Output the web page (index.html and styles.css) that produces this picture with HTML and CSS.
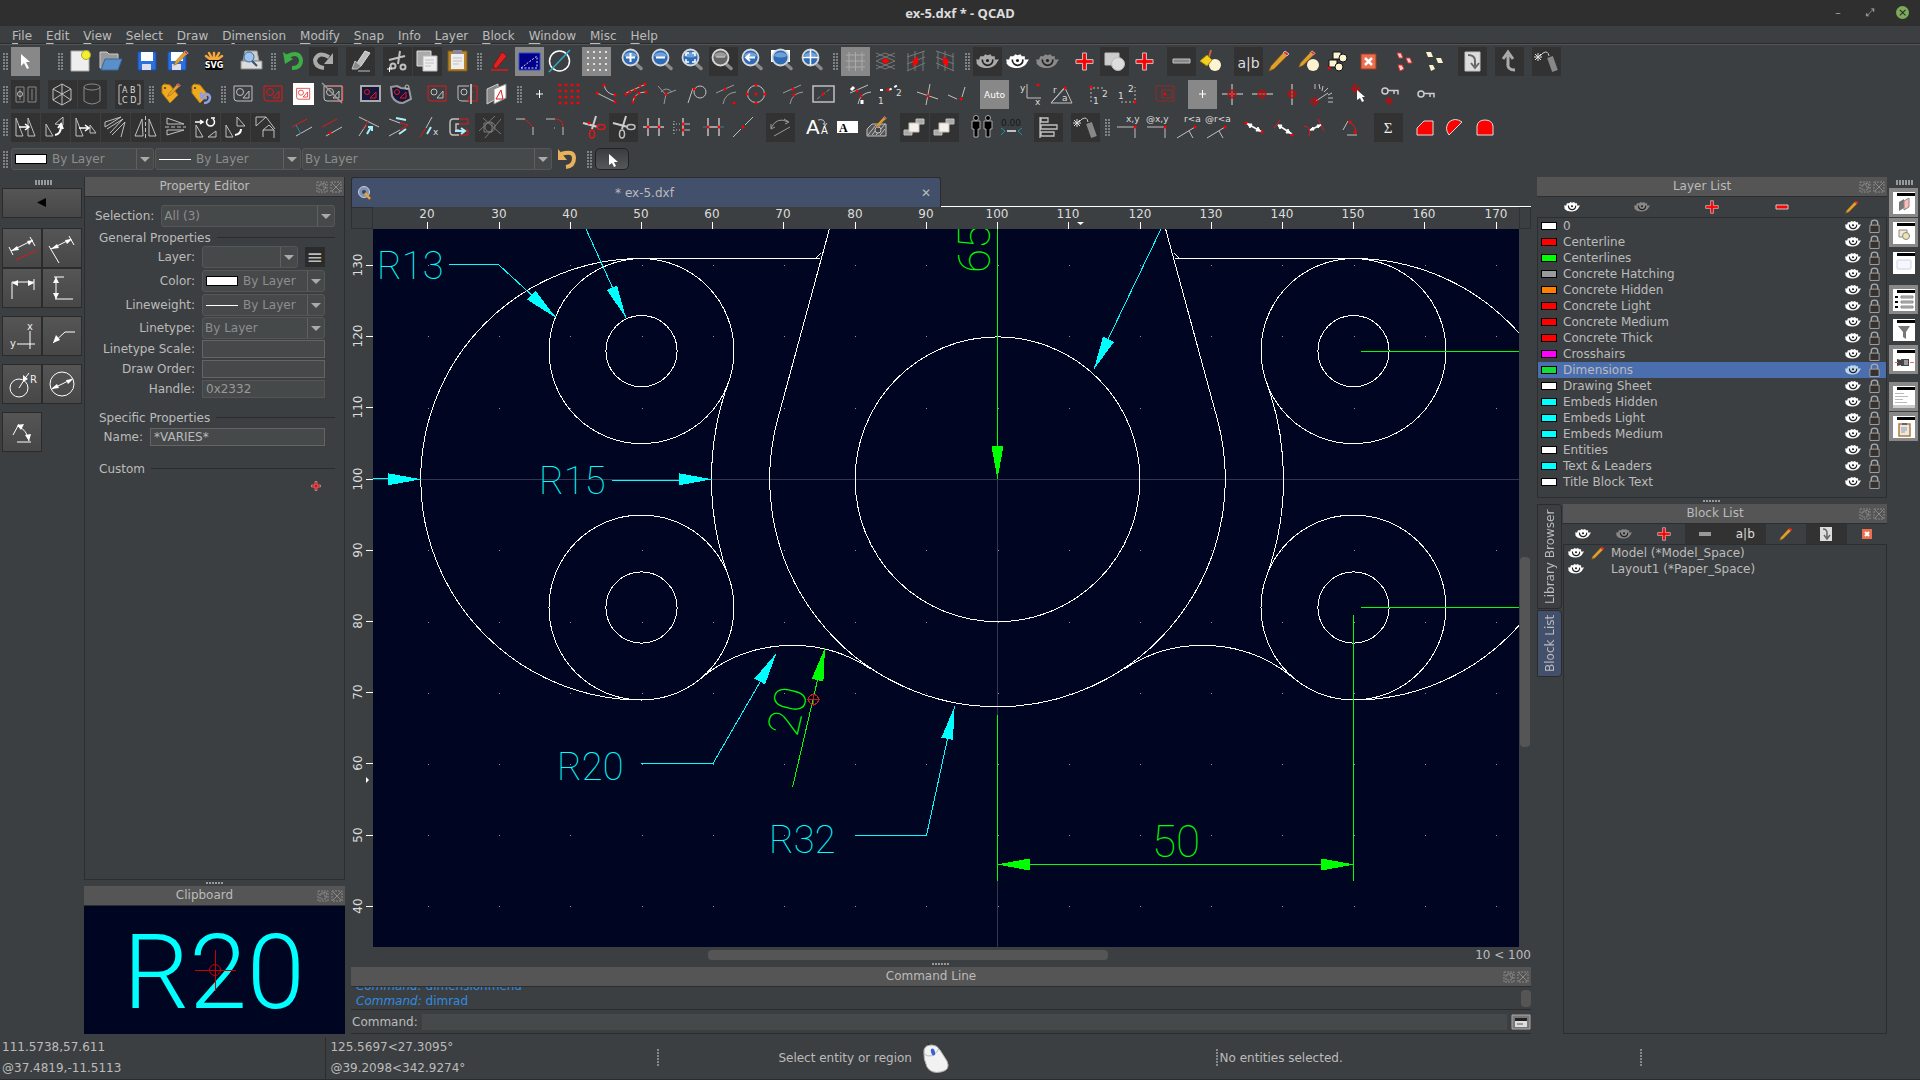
FILE: index.html
```html
<!DOCTYPE html>
<html lang="en">
<head>
<meta charset="utf-8">
<title>ex-5.dxf * - QCAD</title>
<link rel="stylesheet" href="styles.css">
</head>
<body>
<svg class="defs" aria-hidden="true">
<symbol id="mag" viewBox="0 0 29 29"><path d="M16 16L22 21.500" stroke="#8a8a8a" stroke-width="3.500" stroke-linecap="round"/><circle cx="11.500" cy="10.500" r="8" fill="#2f6bb5" stroke="#d4d8dc" stroke-width="1.800"/><path d="M5 9a7 6 0 0 1 13 0q-6 3-13 0z" fill="#6f9fd8" stroke="none"/></symbol>
<symbol id="eye" viewBox="0 0 22 16"><path d="M1 9L0 6l3 0 1-3 3 0 2-2 2 1 3-1 1 2 3 0v3l4 0-2 3c-2 6-16 8-20 0z" fill="currentColor" stroke="none"/><path d="M6 6c0 8 11 7 10 0" fill="none" stroke="#222" stroke-width="1.600"/><circle cx="11" cy="7" r="1.500" fill="#222" stroke="none"/></symbol>
<symbol id="lock" viewBox="0 0 12 16"><path d="M2.500 7V4q0-3 3.500-3t3.500 3v3" fill="none" stroke="#a8a8a8" stroke-width="1.500"/><path d="M1 6.500h10v8H1z" fill="#35312f" stroke="#a8a8a8"/></symbol>
<symbol id="plus" viewBox="0 0 20 20"><path d="M8 1h4v7h7v4h-7v7H8v-7H1V8h7z" fill="#f00" stroke="#ccc"/></symbol>
<symbol id="pencil" viewBox="0 0 22 22"><path d="M1 21L3 16 15 3l4 3L6 19z" fill="#dfa02f" stroke="#8a5a10" stroke-width=".7"/><path d="M15 3l2-2 4 3-2 2z" fill="#f22"/></symbol>
<symbol id="win" viewBox="0 0 22 22"><path d="M0 0h22v22H0z" fill="#fff"/><path d="M0 1h22v3H4V1" fill="#000"/></symbol>
<symbol id="float" viewBox="0 0 12 12"><path d="M1 1h10v10H1zM3 4h5v5H3zM5 4V2.500h4.500V8H8" fill="none" stroke="#8a8a8a" stroke-dasharray="2 1"/></symbol>
<symbol id="close" viewBox="0 0 12 12"><path d="M1 1h10v10H1z" fill="none" stroke="#8a8a8a" stroke-dasharray="2 1"/><path d="M2 2l8 8M10 2l-8 8" fill="none" stroke="#8a8a8a"/></symbol>
<symbol id="shape" viewBox="0 0 29 29"><path d="M5 6h18v15H8q-3 0-3-3z" fill="none"/><circle cx="11" cy="12" r="3.500" fill="none"/><path d="M14 18h6v-7z" fill="none"/></symbol>
<symbol id="tag" viewBox="0 0 29 29"><path d="M5 6l2-2 6 1 8 10-8 8L5 13z" fill="#f0aa1e" stroke="#b87c0c"/><path d="M8 8h0" stroke="#333" stroke-width="2" stroke-linecap="round"/></symbol>
<symbol id="scis" viewBox="0 0 29 29"><path d="M17 3L13 16M4 10l15 4" stroke="#ccc" stroke-width="2"/><ellipse cx="22" cy="14" rx="4" ry="2.500" fill="none" stroke-width="1.500"/><ellipse cx="13" cy="21" rx="2.500" ry="4" fill="none" stroke-width="1.500"/></symbol>
<symbol id="bomb" viewBox="0 0 29 29"><path d="M18 10l5 14" stroke="#888" stroke-width="6"/><path d="M17 9q-1-6-6-3l-3 3" fill="none" stroke="#ccc"/><path d="M6 6v8M2 10h8M3 7l6 6M9 7l-6 6" stroke="#ddd"/></symbol>
<symbol id="key" viewBox="0 0 18 10"><circle cx="4" cy="5" r="3" fill="none" stroke="#ccc" stroke-width="1.500"/><path d="M7 4.500h10v4M13 5v3" fill="none" stroke="#ccc" stroke-width="1.500"/></symbol>
<symbol id="org" viewBox="0 0 10 10"><circle cx="5" cy="5" r="3.500" fill="none" stroke="#d00"/><path d="M0 5h10M5 0v10" stroke="#d00"/></symbol>
</svg>

<header class="title"><h1>ex-5.dxf * - QCAD</h1><div class="wm"><button aria-label="Minimise">–</button><button aria-label="Restore">⤢</button><button class="x" aria-label="Close">×</button></div></header>
<nav class="menu"><a href="#"><u>F</u>ile</a><a href="#"><u>E</u>dit</a><a href="#"><u>V</u>iew</a><a href="#"><u>S</u>elect</a><a href="#"><u>D</u>raw</a><a href="#">D<u>i</u>mension</a><a href="#"><u>M</u>odify</a><a href="#"><u>S</u>nap</a><a href="#"><u>I</u>nfo</a><a href="#"><u>L</u>ayer</a><a href="#"><u>B</u>lock</a><a href="#"><u>W</u>indow</a><a href="#"><u>M</u>isc</a><a href="#"><u>H</u>elp</a></nav>

<div class="bar" role="toolbar">
<i class="h"></i><button class="on"><svg><path d="M10 7v12l3-3 3 6 2-1-3-6h4z" fill="#fff" stroke="none"/></svg></button><i class="gap"></i><i class="h"></i>
<button><svg><path d="M5 4h18v20H5z" fill="#eee" stroke="#aaa"/><circle cx="20" cy="8" r="4.500" fill="#f4ee2c" stroke="#a8a83a"/></svg></button>
<button><svg><path d="M4 5h7l2 2h9v14H4z" fill="#999" stroke="#ccc"/><path d="M9 12h17l-4 11H5z" fill="#5b8fc8" stroke="#3568a0"/></svg></button><i class="s"></i>
<button><svg><path d="M5 5h18v18H5z" fill="#2a6fe0" stroke="#1b4faa"/><path d="M8 5h12v9H8z" fill="#fff" stroke="none"/><path d="M9 17h9v6H9z" fill="#dde" stroke="none"/></svg></button>
<button><svg><path d="M5 5h18v18H5z" fill="#2a6fe0" stroke="#1b4faa"/><path d="M8 5h12v9H8z" fill="#fff" stroke="none"/><path d="M9 17h9v6H9z" fill="#dde" stroke="none"/><use href="#pencil" x="10" y="3" width="16" height="16"/></svg></button><i class="s"></i>
<button><svg><path d="M14 15V6M14 15L6 9M14 15l8-6M14 15L9 6M14 15l5-9" stroke="#f8a83a" stroke-width="2.500" stroke-linecap="round"/><rect x="5" y="13" width="18" height="10" rx="2" fill="#000" stroke="none"/><text x="14" y="21" text-anchor="middle" class="b">SVG</text></svg></button><i class="s"></i>
<button><svg><path d="M8 4h12l2 10H6z" fill="#ccc" stroke="#999"/><path d="M4 14h21v8H4z" fill="#ddd" stroke="#888"/><circle cx="12" cy="10" r="5" fill="#9fc3ea" stroke="#3c6ea8"/><path d="M15 14l5 5" stroke="#357" stroke-width="2"/></svg></button><i class="h"></i>
<button><svg><path d="M7 10q13-7 15 3 0 8-9 8" stroke="#3cae45" stroke-width="4"/><path d="M4 5l2 12 8-5z" fill="#3cae45" stroke="none"/></svg></button>
<button class="dk"><svg><path d="M20 10Q9 4 6 13q0 7 9 8" stroke="#aaa" stroke-width="4"/><path d="M24 6v11h-9z" fill="#aaa" stroke="none"/></svg></button><i class="s"></i>
<button class="dk"><svg><path d="M19 4l5 2-9 13H9z" fill="#bbb" stroke="#ddd"/><path d="M9 14l6 5-4 3H6zM12 24h12" fill="#888"/></svg></button><i class="s"></i>
<button class="dk"><svg><path d="M17 4l-2 13M6 13l16-4" stroke-width="2"/><circle cx="20" cy="20" r="2.500" stroke-width="2"/><circle cx="10" cy="19" r="2.500" stroke-width="2"/><path d="M4 22h5M6.500 20v5" stroke="#fff"/></svg></button>
<button class="dk"><svg><path d="M4 4h14v15H4z" fill="#aaa" stroke="#ddd"/><path d="M10 9h14v15H10z" fill="#eee" stroke="#bbb"/><path d="M12 13h9M12 16h9M12 19h6"/></svg></button>
<button><svg><path d="M5 4h19v20H5z" fill="#b8842c" stroke="#7c5514"/><path d="M8 7h13v15H8z" fill="#eee" stroke="none"/><path d="M10 3h9v4h-9z" fill="#889" stroke="none"/><path d="M10 11h9M10 14h9M10 17h6"/></svg></button><i class="h"></i>
<button><svg><path d="M8 19l9-14 5 4-11 13z" fill="#d22" stroke="#811"/><path d="M6 23h17" class="r" stroke-width="1.500"/></svg></button>
<button class="on"><svg><path d="M4 6h21v17H4z" fill="#00008b" stroke="#2f4fd0"/><path d="M6 21L22 9M6 21h16V9" stroke="#dde" stroke-dasharray="2 1.500"/></svg></button>
<button><svg><circle cx="14.500" cy="14" r="10" stroke="#fff" stroke-width="1.500"/><path d="M4 25L25 3" stroke="#2fa8c8" stroke-width="1.500"/></svg></button><i class="s"></i>
<button class="on"><svg><path d="M5 5h20M5 11h20M5 17h20M5 23h20" stroke="#ddd" stroke-width="2" stroke-dasharray="2 4"/></svg></button><i class="s"></i>
<button><svg><use href="#mag"/><path d="M7 10.500h9M11.500 6v9" stroke="#fff" stroke-width="2"/></svg></button>
<button><svg><use href="#mag"/><path d="M7 10.500h9" stroke="#fff" stroke-width="2"/></svg></button>
<button><svg><use href="#mag"/><path d="M7 9V6h3M13 6h3v3M16 12v3h-3M10 15H7v-3" stroke="#fff" stroke-width="1.500"/></svg></button>
<button class="dk"><svg class="gray"><use href="#mag"/><path d="M7 10h9" stroke="#ccc"/></svg></button>
<button><svg><use href="#mag"/><path d="M16 10.500H8M11 7l-4 3.500 4 3.500" stroke="#fff" stroke-width="2"/></svg></button>
<button><svg><path d="M2 3h19v12H2z" fill="#fff" stroke="none"/><use href="#mag"/></svg></button>
<button><svg><use href="#mag"/><path d="M11.500 3v15M4 10.500h15" stroke="#fff" stroke-width="1.500"/></svg></button><i class="h"></i>
<button class="on"><svg><path d="M5 8h19M5 14h19M5 20h19M8 5v19M14.500 5v19M21 5v19" stroke="#aaa"/></svg></button>
<button><svg><path d="M5 6l19 8M24 6L5 14l19 8M5 22l19-8M5 10l9-4 10 4M5 18l9 4 10-4" stroke="#777"/><path d="M14.500 11l4 3-4 3-4-3z" class="f"/></svg></button>
<button><svg><path d="M6 10l18-6M6 17l18-7M6 24l18-8M7 6v18M14 4v20M22 4v20" stroke="#777"/><path d="M12 13l5-4v7l-5 4z" class="f"/></svg></button>
<button><svg><path d="M5 4l18 6M5 10l18 7M5 16l18 8M7 4v18M14 4v20M22 6v18" stroke="#777"/><path d="M12 9l5 4v7l-5-4z" class="f"/></svg></button><i class="h"></i>
<button class="dk"><svg class="e1"><use href="#eye" x="3" y="6" width="23" height="17"/></svg></button>
<button><svg class="e2"><use href="#eye" x="3" y="6" width="23" height="17"/></svg></button>
<button><svg class="e3"><use href="#eye" x="3" y="6" width="23" height="17"/></svg></button><i class="s"></i>
<button><svg><use href="#plus" x="5" y="5" width="19" height="19"/></svg></button>
<button class="dk"><svg><path d="M5 6h14v12H5z" fill="#ccc"/><circle cx="18" cy="17" r="6.500" fill="#ddd" stroke="#bbb"/></svg></button>
<button><svg><use href="#plus" x="5" y="5" width="19" height="19"/></svg></button><i class="s"></i>
<button class="dk"><svg><path d="M6 12h17v4H6z" fill="#888"/></svg></button>
<button><svg><circle cx="18" cy="18" r="6" fill="#fcf3d0" stroke="none"/><path d="M3 14l7-6 5 5-5 6z" fill="#f2d21d" stroke="#a88a10"/><path d="M12 10l2-7" stroke="#c63" stroke-width="2"/></svg></button><i class="s"></i>
<button class="dk"><svg><text x="14.500" y="21" text-anchor="middle" font-size="14">a|b</text></svg></button>
<button><svg><use href="#pencil" x="4" y="3" width="22" height="22"/></svg></button>
<button><svg><circle cx="19" cy="18" r="6" fill="#fcf3d0" stroke="none"/><use href="#pencil" x="4" y="3" width="18" height="18"/></svg></button>
<button><svg><g fill="#fcf3d0" stroke="#111"><path d="M9 5h8v7H9zM5 13h8v7H5z"/><circle cx="19" cy="11" r="4"/><circle cx="15" cy="20" r="4"/></g><path class="d" d="M5 21h0"/></svg></button>
<button><svg><path d="M7 7h15v15H7z" fill="#e8704f" stroke="#a33b20"/><path d="M11 11l7 7M18 11l-7 7" stroke="#fff" stroke-width="2.500"/></svg></button><i class="s"></i>
<button><svg><path d="M6 6h4l2 5H8zM15 11h4l2 5h-4zM7 18h4l2 4-4 2z" fill="#fcc" stroke="#d33"/></svg></button>
<button><svg><path d="M5 5h5l2 5H7zM15 11h5l2 5h-5zM8 18h4l2 4-4 2z" fill="#fcf3d0" stroke="none"/></svg></button><i class="s"></i>
<button class="dk"><svg><path d="M7 5h15v19H7z" fill="#ddd"/><path d="M10 8q7 0 7 6v5M13 16l4 5 4-5" stroke="#666" stroke-width="2"/></svg></button><i class="s"></i>
<button class="dk"><svg><path d="M20 23q-8 0-7-7V8M8 12l5-7 5 7" stroke="#aaa" stroke-width="3"/></svg></button><i class="s"></i>
<button class="dk"><svg><use href="#bomb"/></svg></button>
</div>

<div class="bar" role="toolbar">
<i class="h"></i><button class="dk"><svg><path d="M5 7h8v15H5zM17 7h8v15h-8zM9 9v11M21 9v11" stroke="#888"/><circle cx="9" cy="14" r="2.500"/></svg></button><i class="s"></i>
<button class="dk"><svg><path d="M14 4l9 5v11l-9 5-9-5V9zM5 9l9 5 9-5M14 14v11M14 4v10L5 20M14 14l9 6"/></svg></button>
<button class="dk"><svg><ellipse cx="14" cy="7" rx="8" ry="3" stroke="#888"/><path d="M6 7v14q8 6 16 0V7" stroke="#888"/></svg></button><i class="s"></i>
<button class="dk"><svg><path d="M7 5H4v19h3M22 5h3v19h-3"/><text x="7" y="13" font-size="8">A B</text><text x="7" y="23" font-size="8">C D</text></svg></button><i class="h"></i>
<button><svg><use href="#tag"/><use href="#pencil" x="10" y="3" width="14" height="14"/></svg></button>
<button><svg><use href="#tag"/><path d="M14 17q7-6 9 0 0 6-6 6M14 12v6h6" stroke="#8f9fe0" stroke-width="2.500"/></svg></button><i class="h"></i>
<button><svg><use href="#shape"/></svg></button>
<button><svg class="r"><use href="#shape"/></svg></button>
<button><svg class="r"><path d="M4 3h21v22H4z" fill="#fff" stroke="none"/><use href="#shape" x="4" y="4" width="21" height="21"/></svg></button>
<button><svg><path d="M6 6h18v15H14" class="r"/><use href="#shape"/><path d="M3 3l20 20" stroke="#999" stroke-width="1.500"/></svg></button><i class="s"></i>
<button><svg><path d="M5 6h19v15H5z" fill="#14143c" stroke="#aaa" stroke-width="2"/><circle cx="11" cy="12" r="2.500" class="r"/><path d="M14 18h6v-6z" class="r"/></svg></button>
<button><svg><path d="M5 7l6-1 4 2 8 1 2 10-8 4q-8 0-11-7z" fill="#14143c" stroke="#999" stroke-width="2"/><circle cx="11" cy="12" r="2.500" class="r"/><path d="M14 18h6v-6z" class="r"/><circle cx="21" cy="7" r="2"/></svg></button><i class="s"></i>
<button><svg><path d="M5 6h18v15H8q-3 0-3-3z" class="r"/><circle cx="11" cy="12" r="3"/><path d="M14 18h6v-7z"/></svg></button>
<button><svg><path d="M16 6H5v12q0 3 5 3h6"/><circle cx="11" cy="12" r="3"/><path d="M17 6h7v15h-9v-2l5-8" class="r"/><path d="M18 4v20" stroke="#bbb" stroke-width="2"/></svg></button>
<button><svg><path d="M4 9l11-5v14L4 24z" fill="#888" stroke="#ccc"/><path d="M11 9l12-5v14l-12 6z" fill="#fff" stroke="#888"/><path d="M13 19h7l-2-9z" class="r"/></svg></button><i class="h"></i>
<button><svg><path d="M11 14h7M14.500 10v8" stroke="#fff"/></svg></button>
<button><svg><path class="g" d="M5 5h20M5 11h20M5 17h20M5 23h20"/></svg></button><i class="s"></i>
<button><svg><path d="M12 5q2 9 11 10M5 13l18 9"/><path class="d" d="M12 5h0M23 15h0M5 13h0M23 22h0"/></svg></button>
<button><svg><path d="M4 13L24 4M11 21q2-9 13-9"/><path class="d" d="M4 14h0M8 12h0M13 10h0M18 6h0M23 4h0M11 22h0M13 17h0M17 13h0M24 12h0"/></svg></button>
<button><svg><path d="M6 6l8 9M24 10l-10 4-2 10M9 12q5-6 11 0" stroke="#999"/><path class="d" d="M14 14h0"/></svg></button>
<button><svg><circle cx="18" cy="12" r="6"/><path d="M11 8L6 23"/><path class="d" d="M12 9h0"/></svg></button>
<button><svg><path d="M4 13l18-8M11 24q2-11 13-12" stroke="#999"/><path class="d" d="M13 9h0M22 23h0"/></svg></button>
<button><svg><circle cx="14" cy="14" r="8.500"/><path class="d" d="M14 5h0M14 14h0M14 23h0M5 14h0M23 14h0"/></svg></button><i class="s"></i>
<button><svg><path d="M4 13l18-8M11 24q2-11 13-12" stroke="#999"/><path class="d" d="M14 9h0M15 15h0"/></svg></button>
<button><svg><path d="M4 6h21v16H4z" stroke-width="1.500"/><path d="M8 19L21 9" stroke="#888" stroke-dasharray="4 2"/><path class="d" d="M14 14h0"/></svg></button><i class="s"></i>
<button><svg><path d="M4 13l18-8M12 24q2-11 13-12"/><path d="M5 10l3-3M16 20v4" stroke="#fff" stroke-width="3"/><path class="d" d="M11 11h0M15 16h0"/></svg></button>
<button><svg><path d="M4 10h4M13 10L22 5" stroke="#fff" stroke-width="2" stroke-dasharray="3 3"/><path class="d" d="M12 10h0"/><text x="2" y="24" font-size="9">1</text><text x="20" y="16" font-size="9">2</text></svg></button><i class="s"></i>
<button><svg><path d="M4 12l21 7M17 4l-4 21"/><path class="d" d="M15 16h0"/></svg></button>
<button><svg><path d="M5 15l9 4M22 7l-3 10"/><path class="d" d="M18 19h0"/></svg></button><i class="s"></i>
<button class="on"><svg><text x="14.500" y="18" text-anchor="middle" font-size="9" class="wt">Auto</text></svg></button><i class="s"></i>
<button><svg><path d="M10 4v14h14"/><text x="3" y="11" font-size="9">y</text><text x="18" y="25" font-size="9">x</text><path class="d" d="M21 5h0"/></svg></button>
<button><svg><path d="M4 23h21L18 8zM4 23L17 8"/><text x="6" y="13" font-size="9">r</text><text x="15" y="21" font-size="9">a</text><path class="d" d="M18 8h0"/></svg></button><i class="s"></i>
<button><svg><path d="M7 22V8h14" stroke="#bbb" stroke-dasharray="2 2"/><text x="9" y="24" font-size="9">1</text><text x="18" y="17" font-size="9">2</text><path class="d" d="M7 7h0"/></svg></button>
<button><svg><path d="M7 22h14V7" stroke="#bbb" stroke-dasharray="2 2"/><text x="4" y="19" font-size="9">1</text><text x="14" y="12" font-size="9">2</text><path class="d" d="M21 22h0"/></svg></button><i class="s"></i>
<button><svg><g opacity=".5" class="r"><path d="M5 6h18v15H8q-3 0-3-3zM11 10h10v8H11z"/></g><path class="d" d="M14 14h0"/></svg></button><i class="s"></i>
<button class="on"><svg><path d="M11 14h7M14.500 10v8" stroke="#fff"/></svg></button>
<button><svg><path d="M4 14h21M14 4v21" stroke="#ddd"/><use href="#org" x="9" y="9" width="10" height="10"/></svg></button>
<button><svg><path d="M4 14h21" stroke="#ddd"/><use href="#org" x="9" y="9" width="10" height="10"/></svg></button>
<button><svg><path d="M14 4v21" stroke="#ddd"/><use href="#org" x="9" y="9" width="10" height="10"/></svg></button>
<button><svg><path d="M8 21l12-8M7 4v5M11 4l1 5M15 6l-1 5M20 8l-4 4M24 13l-4 2M25 18h-5M25 22h-5"/><use href="#org" x="2" y="17" width="9" height="9"/></svg></button><i class="s"></i>
<button><svg><use href="#org" x="6" y="4" width="9" height="9"/><path d="M12 10v10l3-2 2 4 2-1-2-4h3z" fill="#fff" stroke="none"/></svg></button>
<button><svg><use href="#key" x="6" y="6" width="18" height="10"/><use href="#org" x="10" y="17" width="8" height="8"/></svg></button><i class="s"></i>
<button><svg><use href="#key" x="5" y="9" width="18" height="10"/></svg></button>
</div>

<div class="bar" role="toolbar">
<i class="h"></i><button class="dk"><svg><path d="M5 5v18h7zM17 5v18h7z"/><path d="M8 14h10M14 11l4 3-4 3" stroke="#fff" stroke-width="1.500"/></svg></button>
<button class="dk"><svg><path d="M5 11v12h7zM14 11l8-7v8z"/><path d="M14 22q6-1 6-9M17 15l3-4 2 5" stroke="#fff" stroke-width="2"/></svg></button>
<button class="dk"><svg><path d="M5 5v18h7zM19 12v8h6z"/><path d="M8 15h10M14 12l4 3-4 3" stroke="#fff" stroke-width="1.500"/></svg></button>
<button class="dk"><svg><path d="M4 9l16-5L4 14zM6 16L22 6 9 20M11 22L24 9l-4 15"/></svg></button>
<button class="dk"><svg><path d="M4 23h8L11 6zM18 6v17h7z"/><path d="M14.500 3v22" stroke-dasharray="4 2"/></svg></button>
<button class="dk"><svg><path d="M6 5v6h17zM6 22v-5h17z"/><path d="M4 14h21" stroke-dasharray="4 2"/></svg></button>
<button class="dk"><svg><path d="M5 12v12h7zM17 24h8v-6z"/><path d="M4 9h7M9 7l3 2-3 2M22 6a4 4 0 1 1-5 0M20 5h4" stroke="#fff" stroke-width="1.500"/></svg></button>
<button class="dk"><svg><path d="M5 12v12h7zM16 4v9h8z"/><path d="M14 22q6-1 6-6" stroke="#fff" stroke-width="2"/></svg></button>
<button class="dk"><svg><path d="M5 4h10L5 13zM15 4l9 12M12 24v-7h11v8M12 17l6-5 5 5"/></svg></button><i class="s"></i>
<button><svg><path d="M4 14l15-8" class="r"/><path d="M8 23l16-9"/><path d="M8 12l5 9" class="c"/></svg></button>
<button><svg><path d="M4 14l15-8" class="r"/><path d="M8 23l16-9"/><path class="d" d="M12 20h0"/></svg></button><i class="s"></i>
<button><svg><path d="M4 4l20 10M4 23l7-11"/><path d="M8 16l5-8" class="r"/><path d="M12 21l4-7M13 14h4v4" class="ar"/></svg></button>
<button><svg><path d="M4 6l11 4M4 23l11-6"/><path d="M15 10l8 2-8 5" class="r"/><path d="M11 5l10 2M14 21l7-5" class="ar"/></svg></button>
<button><svg><path d="M17 4l-6 11"/><path d="M11 15L5 24" class="r"/><path d="M16 14l-4 7" class="ar"/><text x="18" y="22" font-size="9">x</text></svg></button>
<button><svg><path d="M14 6H8q-3 0-3 4v8q0 4 3 4h6M14 11h-3v6h3" stroke-width="1.500"/><path d="M14 6h9v5h-9M14 17h9v5h-9" class="r"/><path d="M10 18h10M16 15l4 3-4 3" class="ar"/></svg></button>
<button class="dk"><svg opacity=".5"><circle cx="15" cy="14" r="5"/><path d="M9 10h8v9H9zM4 18L20 3M10 25L26 6M8 5l18 16"/></svg></button><i class="s"></i>
<button><svg><path d="M4 6h9M21 14v8"/><path d="M13 6l8 8" class="r"/></svg></button>
<button><svg><path d="M4 6h9M21 14v8"/><path d="M13 6q8 0 8 8" class="r"/><path d="M12 15h1" stroke="#29c" stroke-width="2"/></svg></button><i class="s"></i>
<button><svg class="r"><use href="#scis"/><path class="d" d="M10 10h0"/></svg></button>
<button class="dk"><svg><use href="#scis"/></svg></button>
<button><svg><path d="M9 5v18M20 5v18M4 14h21" stroke-width="1.500"/><path class="d" d="M9 14h0M20 14h0"/></svg></button>
<button><svg><path d="M14 5v18" stroke-width="1.500"/><path d="M4 11h10M4 17h10M5 8v14" stroke-dasharray="1 2"/><path d="M14 11h7M14 17h7"/><path class="d" d="M14 11h0M14 17h0"/></svg></button>
<button><svg><path d="M9 5v18M20 5v18M9 14h11" stroke-width="1.500"/><path d="M4 14h5M20 14h5" class="c"/><path class="d" d="M9 14h0M20 14h0"/></svg></button>
<button><svg><path d="M4 24l8-8M16 12l8-8"/><path class="d" d="M14 14h0"/></svg></button><i class="s"></i>
<button class="dk"><svg><path d="M8 23l16-9M5 15q6-12 17-6M5 11v5l4-2M18 6l5 3-4 2" stroke="#999"/></svg></button><i class="s"></i>
<button><svg><text x="3" y="21" font-size="20" class="wt">A</text><text x="18" y="21" font-size="10" class="wt">A</text><path d="M15 7q7-2 7 5M20 10l2 3 2-3"/></svg></button>
<button><svg><path d="M4 8h21v12H4z" fill="#fff" stroke="none"/><text x="6" y="19" class="se" font-size="12">A</text></svg></button>
<button><svg><path d="M4 16l5-5h14v12H4z" fill="#555"/><path d="M5 22l8-10M9 22l9-11M13 22l9-11M17 22l5-6"/><circle cx="15" cy="17" r="3" fill="#444"/><use href="#pencil" x="12" y="3" width="12" height="12"/></svg></button><i class="s"></i>
<button class="dk"><svg><path d="M4 17h8v5H4zM16 6h8v5h-8z" fill="#aaa"/><path d="M9 10h10v9H9z" fill="#f5efe6"/></svg></button>
<button class="dk"><svg><path d="M4 17h8v5H4zM16 6h8v5h-8z" fill="#aaa"/><path d="M9 10h10v9H9z" fill="#f5efe6"/></svg></button><i class="s"></i>
<button><svg><g fill="#000" stroke="#aaa"><circle cx="9" cy="5" r="2.500"/><circle cx="21" cy="5" r="2.500"/><path d="M5 8h8v8h-2v8H7v-8H5zM17 8h8v8h-2v8h-4v-8h-2z"/></g></svg></button>
<button><svg><text x="14" y="13" text-anchor="middle" font-size="9" class="bk">0.00</text><path d="M4 15l4 3-4 4M25 15l-4 3 4 4" class="c"/><path d="M10 18h9" stroke-width="2"/></svg></button><i class="s"></i>
<button class="dk"><svg><path d="M6 4v21M7 5h7v4H7zM7 12h16v4H7zM7 19h13v4H7z" stroke-width="1.300"/></svg></button><i class="s"></i>
<button class="dk"><svg><use href="#bomb"/></svg></button><i class="h"></i>
<button><svg class="sm"><path d="M4 14h18v11"/><text x="13" y="9">x,y</text><path class="d" d="M22 14h0"/></svg></button>
<button><svg class="sm"><path d="M4 14h18v11"/><text x="3" y="9">@x,y</text><path class="d" d="M22 14h0"/></svg></button>
<button><svg class="sm"><path d="M4 25l18-11M16 18l4 7"/><text x="11" y="9">r&lt;a</text><path class="d" d="M22 14h0"/></svg></button>
<button><svg class="sm"><path d="M4 25l18-11M16 18l4 7"/><text x="2" y="9">@r&lt;a</text><path class="d" d="M22 14h0"/></svg></button><i class="s"></i>
<button><svg><path d="M6 10l16 9" stroke="#fff" stroke-width="1.500"/><path d="M8 11l4 0-2 4zM20 18l-4 0 2-4z" fill="#fff" stroke="#fff"/><path class="d" d="M6 10h0M22 19h0"/></svg></button>
<button><svg><path d="M4 15L10 7" class="r"/><path d="M8 12l14 9" stroke="#fff" stroke-width="1.500"/><path d="M8 12l4 0-2 4zM20 20l-4 0 2-4z" fill="#fff" stroke="#fff"/><path class="d" d="M22 22h0"/></svg></button>
<button><svg><path d="M4 13q8 1 5 10M18 6l6 12" class="r"/><path d="M10 17l11-5" stroke="#fff" stroke-width="1.500"/><path d="M10 17l3-3 1 3zM21 12l-3 3-1-3z" fill="#fff" stroke="#fff"/></svg></button><i class="s"></i>
<button><svg><path d="M6 17l5-9M10 22h10"/><path d="M12 9q7 3 7 12" class="r"/><path class="d" d="M13 9h0M18 19h0"/></svg></button><i class="s"></i>
<button class="dk"><svg><text x="14" y="20" text-anchor="middle" class="se2" font-size="15">Σ</text></svg></button><i class="s"></i>
<button><svg><path d="M6 22v-7l7-7h9v14z" fill="#f00" stroke="#ddd"/></svg></button>
<button><svg><path d="M8 22L21 9Q14 4 8 9q-5 6 0 13z" fill="#f00" stroke="#ddd"/></svg></button>
<button><svg><path d="M6 22V13q1-6 8-6t8 6v9z" fill="#f00" stroke="#ddd"/></svg></button>
</div>

<div class="bar pens" role="toolbar">
<i class="h"></i>
<label class="combo c1"><i class="sw"></i><select aria-label="Color"><option>By Layer</option></select><i class="dn"></i></label>
<label class="combo c2"><i class="ln"></i><select aria-label="Lineweight"><option>By Layer</option></select><i class="dn"></i></label>
<label class="combo c3"><select aria-label="Linetype"><option>By Layer</option></select><i class="dn"></i></label>
<button aria-label="Reset"><svg><path d="M8 9q13-4 13 4 0 8-8 9" stroke="#e8b25c" stroke-width="4"/><path d="M5 4v11h9z" fill="#e8b25c" stroke="none"/></svg></button>
<i class="h"></i><button class="arrowbtn" aria-label="Select"><svg><path d="M13 8v11l3-2 2 4 2-1-2-4h4z" fill="#fff" stroke="none"/></svg></button>
</div>

<main>
<aside class="pal"><i class="grip"></i>
<button class="back" aria-label="Back"><svg width="10" height="9"><path d="M0 4.500L9 0v9z"/></svg></button>
<div class="pg"><button><svg><path d="M8 22L30 11M6 18l4 8M27 8l5 9" class="p"/><path d="M8 22l6-5 2 4zM30 11l-6 1 2 4z" class="pf"/><path d="M13 31l21-10" class="r"/></svg></button><button><svg><path d="M8 20L28 10M6 17l10 17M26 7l5 9" class="p"/><path d="M8 20l6-5 2 4zM29 10l-7 1 2 4z" class="pf"/></svg></button>
<button><svg><path d="M9 30V13h22M31 10v11" class="p"/><path d="M9 14l6-3v6zM31 14l-6-3v6z" class="pf"/></svg></button><button><svg><path d="M11 8h10M13 8v22M12 30h18" class="p"/><path d="M13 8l-3 6h6zM13 30l-3-6h6z" class="pf"/></svg></button></div>
<div class="pg"><button><svg><path d="M27 14v18M14 27h18" class="p"/><text x="24" y="13">x</text><text x="7" y="30">y</text></svg></button><button><svg><path d="M10 26l12-11h10" class="p"/><path d="M10 26l3-8 4 5z" class="pf"/></svg></button></div>
<div class="pg"><button><svg><circle cx="16" cy="23" r="9" class="p"/><path d="M16 23l7-11 3-4" class="p"/><path d="M20 17l0-7 5 4z" class="pf"/><text x="27" y="18">R</text></svg></button><button><svg><circle cx="19" cy="19" r="12" class="p"/><path d="M9 24l20-10" class="p"/><path d="M8 24l6-5 2 4zM30 14l-7 1 2 4z" class="pf"/></svg></button></div>
<div class="pg"><button><svg><path d="M10 22l6-11M14 29h14M15 13q9 4 11 15" class="p"/><path d="M14 12l7-1-3 6zM26 28l-4-6 6-1z" class="pf"/></svg></button></div>
</aside>

<div class="leftcol">
<section class="dock props"><h2>Property Editor<span class="db"><svg><use href="#float"/></svg><svg><use href="#close"/></svg></span></h2>
<form class="form">
<div class="pr top"><label for="sel">Selection:</label><span class="combo grow"><select id="sel"><option>All (3)</option></select><i class="dn"></i></span></div>
<h3>General Properties</h3>
<div class="pr"><label for="ly">Layer:</label><span class="combo ly"><select id="ly"><option></option></select><i class="dn"></i></span><button type="button" class="lst" aria-label="List">≡</button></div>
<div class="pr"><label for="co">Color:</label><span class="combo"><i class="sw"></i><select id="co"><option>By Layer</option></select><i class="dn"></i></span></div>
<div class="pr"><label for="lw">Lineweight:</label><span class="combo"><i class="ln"></i><select id="lw"><option>By Layer</option></select><i class="dn"></i></span></div>
<div class="pr lt"><label for="lt">Linetype:</label><span class="combo"><select id="lt"><option>By Layer</option></select><i class="dn"></i></span></div>
<div class="pr t"><label for="ls">Linetype Scale:</label><input id="ls"></div>
<div class="pr t"><label for="do">Draw Order:</label><input id="do"></div>
<div class="pr t"><label for="ha">Handle:</label><input id="ha" class="ro" value="0x2332" readonly></div>
<h3 class="sp">Specific Properties</h3>
<div class="pr t nm"><label for="na">Name:</label><input id="na" value="*VARIES*"></div>
<h3 class="sp cu">Custom</h3>
<button type="button" class="add" aria-label="Add"><svg width="10" height="10" viewBox="0 0 20 20"><use href="#plus"/></svg></button>
</form></section>
<i class="grip"></i>
<section class="dock clip"><h2>Clipboard<span class="db"><svg><use href="#float"/></svg><svg><use href="#close"/></svg></span></h2>
<svg class="cv" viewBox="0 0 261 128" preserveAspectRatio="xMidYMid meet"><text x="130" y="102" text-anchor="middle" class="big">R20</text><g stroke="#c80000" fill="none"><circle cx="131" cy="64" r="5.500"/><path d="M111 64.500h41M131.500 44v41"/></g></svg></section>
</div>

<div class="center">
<div class="tabs"><div class="tab"><svg width="14" height="16" viewBox="0 0 14 16"><circle cx="6" cy="7" r="5.500" fill="#7f93b5" stroke="#ccd"/><circle cx="6" cy="7" r="2" fill="#345"/><path d="M7 8l5 6" stroke="#f0a030" stroke-width="2.500"/></svg><span>* ex-5.dxf</span><button aria-label="Close tab">✕</button></div></div>
<div class="view">
<i class="corner"></i>
<svg class="rt" viewBox="373 207 1146 22" preserveAspectRatio="xMinYMin slice"><g text-anchor="middle"><text x="427" y="218">20</text><text x="499" y="218">30</text><text x="570" y="218">40</text><text x="641" y="218">50</text><text x="712" y="218">60</text><text x="783" y="218">70</text><text x="855" y="218">80</text><text x="926" y="218">90</text><text x="997" y="218">100</text><text x="1068" y="218">110</text><text x="1140" y="218">120</text><text x="1211" y="218">130</text><text x="1282" y="218">140</text><text x="1353" y="218">150</text><text x="1424" y="218">160</text><text x="1496" y="218">170</text></g><path d="M427.500 222v7M499.500 222v7M570.500 222v7M641.500 222v7M712.500 222v7M783.500 222v7M855.500 222v7M926.500 222v7M997.500 222v7M1068.500 222v7M1140.500 222v7M1211.500 222v7M1282.500 222v7M1353.500 222v7M1424.500 222v7M1496.500 222v7" stroke="#fff"/><path d="M1077 222h7l-3.500 3z" fill="#fff"/></svg>
<i class="corner"></i>
<svg class="rl" viewBox="351 229 22 718" preserveAspectRatio="xMinYMin slice"><g text-anchor="middle"><text transform="translate(362 265) rotate(-90)">130</text><text transform="translate(362 336) rotate(-90)">120</text><text transform="translate(362 407) rotate(-90)">110</text><text transform="translate(362 479) rotate(-90)">100</text><text transform="translate(362 550) rotate(-90)">90</text><text transform="translate(362 621) rotate(-90)">80</text><text transform="translate(362 692) rotate(-90)">70</text><text transform="translate(362 763) rotate(-90)">60</text><text transform="translate(362 835) rotate(-90)">50</text><text transform="translate(362 906) rotate(-90)">40</text></g><path d="M366 265.500h7M366 336.500h7M366 407.500h7M366 479.500h7M366 550.500h7M366 621.500h7M366 692.500h7M366 763.500h7M366 835.500h7M366 906.500h7" stroke="#fff"/><path d="M366 777l3 3-3 3z" fill="#fff"/></svg>
<svg class="canvas" viewBox="373 229 1146 718" preserveAspectRatio="xMinYMin slice" shape-rendering="crispEdges">
<g stroke="#8d90a0" stroke-dasharray="1 70.2"><path d="M428 265.500h1100M428 336.500h1100M428 408.500h1100M428 479.500h1100M428 550.500h1100M428 622.500h1100M428 693.500h1100M428 764.500h1100M428 835.500h1100M428 906.500h1100"/></g>
<path d="M373 479.500h1146M997.500 229v718" stroke="#34384e"/>
<g fill="none" stroke="#fff">
<circle cx="997.500" cy="479.300" r="142.400"/>
<circle cx="641.500" cy="351.100" r="92.500"/><circle cx="641.500" cy="351.100" r="35.600"/>
<circle cx="641.500" cy="607.500" r="92.500"/><circle cx="641.500" cy="607.500" r="35.600"/>
<circle cx="1353.500" cy="351.100" r="92.500"/><circle cx="1353.500" cy="351.100" r="35.600"/>
<circle cx="1353.500" cy="607.500" r="92.500"/><circle cx="1353.500" cy="607.500" r="35.600"/>
<path d="M820 258.500H641.500a220.700 220.700 0 0 0 0 441.500M1175 258.500h178.500a220.700 220.700 0 0 1 0 441.500"/>
<path d="M829.400 229L777.600 419.500A227.800 227.800 0 1 0 1217.400 419.500L1165.600 229"/>
<path d="M816 258l5-5M1179 258l-5-5"/>
<path d="M728.400 382.400A285.800 285.800 0 0 0 728.400 576.200M1266.600 382.400A285.800 285.800 0 0 1 1266.600 576.200"/>
<path d="M700.600 678.700A142.400 142.400 0 0 1 870.800 669M1294.400 678.700A142.400 142.400 0 0 0 1124.200 669"/>
</g>
<g stroke="#0f0" fill="#0f0"><path d="M997.500 229v250M997.500 715v166M997 864.500h357M1353.500 615v266M1361 351.500h160M1361 607.500h160M792.500 787.500L825 648" fill="none"/><g stroke="none"><path d="M997.500 479l-6-33h12zM997 864.500l33-6v12zM1354 864.500l-33-6v12zM825 648l-13.300 30.800 11.700 2.700z"/></g></g>
<g stroke="#0ff" fill="none"><path d="M449 264.500l50 .5 56.500 52M586 229l40 88.500M373 478.500l48 .8M612 480.500h50l50-1M641 763.500h72l63.500-110M855 835.500h71.500l28-129M1161 229l-67 139.500"/></g>
<g fill="#0ff"><path d="M555.500 317.500l-28.500-18 8.500-9zM626 318l-19-28 10-4.500zM421 479.300l-33-6v12zM712 479.300l-33-6v12zM776.500 653l-22 25.500 10.500 6zM954.500 706.500l-13 31 11.500 2.500zM1094 369l9-32.500 11 5.500z"/></g>
<g class="cad cy"><text x="377" y="279">R13</text><text x="539" y="494">R15</text><text x="557" y="780">R20</text><text x="769" y="853">R32</text></g>
<g class="cad gr"><text x="1152" y="857">50</text><text transform="translate(990 273) rotate(-90)">65</text><text transform="translate(797 738) rotate(-77)">20</text></g>
<g stroke="#b22" fill="none"><circle cx="813.500" cy="699.500" r="5"/><path d="M807 699.500h13M813.500 693v13"/></g>
</svg>
<div class="vs"><i></i></div>
<div class="hs"><i></i><span>10 &lt; 100</span></div>
</div>
<i class="grip"></i>
<section class="dock cmd"><h2>Command Line<span class="db"><svg><use href="#float"/></svg><svg><use href="#close"/></svg></span></h2>
<div class="log"><p><em>Command:</em> dimensionmenu</p><p><em>Command:</em> dimrad</p><i></i></div>
<div class="ci"><label for="ci">Command:</label><input id="ci"><button aria-label="Options"><svg width="20" height="16"><path d="M1 1h18v14H1z" fill="#777" stroke="#aaa"/><path d="M4 4h12v9H4z" fill="#ddd"/><path d="M4 4h12v3H4z" fill="#222"/><path d="M6 10h6" stroke="#555"/></svg></button></div>
</section>
</div>

<div class="rightcol">
<section class="dock layers"><h2>Layer List<span class="db"><svg><use href="#float"/></svg><svg><use href="#close"/></svg></span></h2>
<div class="lb"><button><svg class="ey"><use href="#eye"/></svg></button><button><svg class="ey off"><use href="#eye"/></svg></button><button><svg class="ic"><use href="#plus"/></svg></button><button><svg class="ic"><path d="M1 5h12v4H1z" fill="#f00" stroke="#ccc"/></svg></button><button><svg class="ic"><use href="#pencil"/></svg></button></div>
<div class="list"><table>
<tr><td><i class="q" style="background:#fff"></i></td><td>0</td><td><svg class="ey"><use href="#eye"/></svg></td><td><svg class="lk"><use href="#lock"/></svg></td></tr>
<tr><td><i class="q" style="background:#f00"></i></td><td>Centerline</td><td><svg class="ey"><use href="#eye"/></svg></td><td><svg class="lk"><use href="#lock"/></svg></td></tr>
<tr><td><i class="q" style="background:#0f0"></i></td><td>Centerlines</td><td><svg class="ey"><use href="#eye"/></svg></td><td><svg class="lk"><use href="#lock"/></svg></td></tr>
<tr><td><i class="q" style="background:#9a999e"></i></td><td>Concrete Hatching</td><td><svg class="ey"><use href="#eye"/></svg></td><td><svg class="lk"><use href="#lock"/></svg></td></tr>
<tr><td><i class="q" style="background:#ff7f00"></i></td><td>Concrete Hidden</td><td><svg class="ey"><use href="#eye"/></svg></td><td><svg class="lk"><use href="#lock"/></svg></td></tr>
<tr><td><i class="q" style="background:#f00"></i></td><td>Concrete Light</td><td><svg class="ey"><use href="#eye"/></svg></td><td><svg class="lk"><use href="#lock"/></svg></td></tr>
<tr><td><i class="q" style="background:#f00"></i></td><td>Concrete Medium</td><td><svg class="ey"><use href="#eye"/></svg></td><td><svg class="lk"><use href="#lock"/></svg></td></tr>
<tr><td><i class="q" style="background:#f00"></i></td><td>Concrete Thick</td><td><svg class="ey"><use href="#eye"/></svg></td><td><svg class="lk"><use href="#lock"/></svg></td></tr>
<tr><td><i class="q" style="background:#f0f"></i></td><td>Crosshairs</td><td><svg class="ey"><use href="#eye"/></svg></td><td><svg class="lk"><use href="#lock"/></svg></td></tr>
<tr class="cur"><td><i class="q" style="background:#13dd38"></i></td><td>Dimensions</td><td><svg class="ey"><use href="#eye"/></svg></td><td><svg class="lk"><use href="#lock"/></svg></td></tr>
<tr><td><i class="q" style="background:#fff"></i></td><td>Drawing Sheet</td><td><svg class="ey"><use href="#eye"/></svg></td><td><svg class="lk"><use href="#lock"/></svg></td></tr>
<tr><td><i class="q" style="background:#0ff"></i></td><td>Embeds Hidden</td><td><svg class="ey"><use href="#eye"/></svg></td><td><svg class="lk"><use href="#lock"/></svg></td></tr>
<tr><td><i class="q" style="background:#0ff"></i></td><td>Embeds Light</td><td><svg class="ey"><use href="#eye"/></svg></td><td><svg class="lk"><use href="#lock"/></svg></td></tr>
<tr><td><i class="q" style="background:#0ff"></i></td><td>Embeds Medium</td><td><svg class="ey"><use href="#eye"/></svg></td><td><svg class="lk"><use href="#lock"/></svg></td></tr>
<tr><td><i class="q" style="background:#fff"></i></td><td>Entities</td><td><svg class="ey"><use href="#eye"/></svg></td><td><svg class="lk"><use href="#lock"/></svg></td></tr>
<tr><td><i class="q" style="background:#0ff"></i></td><td>Text &amp; Leaders</td><td><svg class="ey"><use href="#eye"/></svg></td><td><svg class="lk"><use href="#lock"/></svg></td></tr>
<tr><td><i class="q" style="background:#fff"></i></td><td>Title Block Text</td><td><svg class="ey"><use href="#eye"/></svg></td><td><svg class="lk"><use href="#lock"/></svg></td></tr>
</table></div></section>
<i class="grip"></i>
<div class="lower">
<div class="vt"><button class="v1">Library Browser</button><button class="v2">Block List</button></div>
<section class="dock blocks"><h2>Block List<span class="db"><svg><use href="#float"/></svg><svg><use href="#close"/></svg></span></h2>
<div class="lb"><button><svg class="ey"><use href="#eye"/></svg></button><button><svg class="ey off"><use href="#eye"/></svg></button><button><svg class="ic"><use href="#plus"/></svg></button><button class="dk"><svg class="ic"><path d="M1 5h12v4H1z" fill="#999"/></svg></button><button class="dk">a|b</button><button><svg class="ic"><use href="#pencil"/></svg></button><button class="dk"><svg class="ic"><path d="M1 0h12v14H1z" fill="#ddd"/><path d="M4 2q4 0 4 4v5M5 8l3 4 3-4" fill="none" stroke="#666" stroke-width="1.500"/></svg></button><button><svg class="ic"><path d="M2 2h10v10H2z" fill="#e8704f"/><path d="M5 5l4 4M9 5l-4 4" stroke="#fff" stroke-width="2"/></svg></button></div>
<div class="list"><table class="bt"><tr><td><svg class="ey"><use href="#eye"/></svg></td><td><svg class="ic"><use href="#pencil"/></svg></td><td>Model (*Model_Space)</td></tr><tr><td><svg class="ey"><use href="#eye"/></svg></td><td></td><td>Layout1 (*Paper_Space)</td></tr></table></div></section>
</div>
</div>

<aside class="wins"><i class="grip"></i>
<button class="on"><svg><use href="#win"/><path d="M6 10l5-3v9l-5 3z" fill="#777"/><path d="M11 9l5-3v9l-5 3z" fill="#fbb" stroke="#888"/></svg></button>
<button class="on"><svg><use href="#win"/><path d="M6 8h8v7H6z" fill="#f2ead0" stroke="#888"/><circle cx="13" cy="14" r="3.500" fill="#eee2b0" stroke="#888"/></svg></button>
<button><svg><use href="#win"/><rect x="4" y="8" width="14" height="9" rx="1" fill="#f4f8fc" stroke="#c8d4e4"/></svg></button><i class="ws"></i>
<button class="on"><svg><use href="#win"/><path d="M2 7h3v2H2zM2 12h3v2H2zM2 17h3v2H2z"/><path d="M8 7h12v2H8zM8 12h12v2H8zM8 17h12v2H8z" fill="#bbb" stroke="#888"/></svg></button>
<button><svg><use href="#win"/><path d="M5 7h12l-4 6v7l-3-2v-5z" fill="#777"/></svg></button>
<button class="on"><svg><use href="#win"/><path d="M4 10l4 1v5l-4 1zM8 10h8v7H8z" fill="#444"/><path d="M11 11h4v5h-4z" fill="#999"/><path d="M2 13.500h3M17 13.500h4" stroke="#e66"/></svg></button><i class="ws"></i>
<button class="on"><svg><use href="#win"/><path d="M2 7.500h9M2 10.500h13M2 13.500h8M2 16.500h12" stroke="#bbb"/><path d="M0 19h22v3H0z" fill="#ccc"/></svg></button>
<button class="on"><svg><use href="#win"/><path d="M6 8h11v12H6z" fill="#e8e8e8" stroke="#b07a3a" stroke-width="1.500"/><path d="M9 7h5v2H9z" fill="#666"/><path d="M8 12h6M8 14h6M8 16h4" stroke="#999"/></svg></button>
</aside>
</main>

<footer class="status"><div class="s1"><p>111.5738,57.611</p><p>@37.4819,-11.5113</p></div><div class="s2"><p>125.5697&lt;27.3095°</p><p>@39.2098&lt;342.9274°</p></div><i class="vg"></i><div class="s3"><span>Select entity or region</span><svg width="28" height="32" viewBox="0 0 28 32"><path d="M6 1l2 7" stroke="#222" fill="none"/><path d="M2 8q1-5 8-5 5 0 8 5l7 11q4 9-6 11-10 2-14-5-4-8-3-17z" fill="#f2f2f2" stroke="#aaa"/><path d="M2 12q8 6 15-5" fill="none" stroke="#bbb"/><ellipse cx="11" cy="10" rx="2" ry="3.500" fill="#3a62d8" transform="rotate(-15 11 10)"/></svg></div><i class="vg"></i><div class="s4">No entities selected.</div><i class="vg"></i><div class="s5"></div></footer>
</body>
</html>
```
FILE: styles.css
```css
* { box-sizing: border-box; }
html, body { margin: 0; height: 100%; }
body { display: flex; flex-direction: column; min-height: 100vh; background: #3c3f41; color: #bbb; font: 12px/14px "DejaVu Sans", sans-serif; overflow: hidden; }
button, select, input { font: inherit; color: inherit; margin: 0; padding: 0; border: 0; background: none; }
i { font-style: normal; }
p, h1, h2, h3 { margin: 0; font: inherit; }
.defs { display: none; }

.title { flex: none; display: flex; align-items: center; height: 26px; background: #2f2f2f; }
.title h1 { flex: 1; text-align: center; font: bold 13px/26px "Noto Sans", sans-serif; color: #dcdcdc; padding-left: 88px; }
.wm { display: flex; gap: 20px; width: 88px; color: #aaa; }
.wm button { width: 12px; font-size: 11px; }
.wm .x { width: 13px; height: 13px; line-height: 12px; border-radius: 7px; background: #7dab5a; color: #222; }

.menu { flex: none; display: flex; gap: 14px; height: 18px; padding: 3px 12px 0; line-height: 14px; border-bottom: 1px solid #2b2b2b; box-shadow: 0 1px #555; }
.menu a { color: #bbb; text-decoration: none; }
.menu u { text-underline-offset: 3px; }

.bar { flex: none; display: flex; height: 33px; padding: 3px 0 0; }
.bar button { flex: none; width: 29px; height: 29px; margin-right: 1px; }
.bar svg { display: block; width: 29px; height: 29px; fill: none; stroke: #c0c0c0; }
.bar text { fill: #ddd; stroke: none; }
.on { background: #888; }
.dk { background: #323232; }
.s { flex: none; width: 7px; }
.gap { flex: none; width: 13px; }
.h { flex: none; width: 12px; height: 29px; background: linear-gradient(90deg, transparent 2px, #3c3f41 2px 3px, transparent 3px) 4px 6px / 5px 17px no-repeat, repeating-linear-gradient(#808284 0 2px, #3c3f41 2px 3px) 4px 6px / 5px 17px no-repeat; }
.h:first-child { margin-left: -1px; }
.bar .b { font-weight: bold; fill: #fff; font-size: 8px; }
.bar .wt { fill: #fff; }
.bar .bk { fill: #16191b; }
.bar .se { font-family: "Liberation Serif", serif; font-weight: bold; fill: #000; }
.bar .se2 { font-family: "Liberation Serif", serif; fill: #eee; }
.bar .sm text { font-size: 9px; }
.bar svg.r, .r { stroke: #e01818; }
.f { fill: #f00; stroke: none; }
.d { stroke: #f00; stroke-width: 3; stroke-linecap: round; }
.g { stroke: #f00; stroke-width: 3; stroke-dasharray: 0 6; stroke-linecap: round; }
.c { stroke: #1f8fa5; }
.ar { stroke: #a8f0ff; stroke-width: 2; }
.gray { filter: grayscale(1); }
.e1 { color: #aaa; }
.e2 { color: #fff; }
.e3 { color: #8a8a8a; }

.pens { height: 34px; padding-top: 5px; }
.pens .combo { height: 22px; margin-right: 1px; }
.pens button { height: 22px; }
.pens button svg { margin-top: -3px; }
.pens .h { background-position: 4px 3px; }
.c1 { width: 143px; }
.c2 { width: 146px; }
.c3 { width: 250px; }
.pens .arrowbtn { width: 34px; border: 1px solid #222; border-radius: 5px; background: linear-gradient(#3a3c3e, #55585a); }

.combo { display: flex; align-items: center; height: 22px; border: 1px solid #565656; border-radius: 3px; background: #45494a; color: #8e8e8e; }
.combo select { flex: 1; min-width: 0; height: 18px; padding-left: 2px; appearance: none; }
.dn { width: 17px; height: 100%; border-left: 1px solid #606060; display: flex; align-items: center; justify-content: center; }
.dn::after { content: ""; border: 5px solid transparent; border-top-color: #aaa; margin-top: 5px; }
.sw { flex: none; width: 32px; height: 10px; margin: 0 3px; border: 1px solid #000; background: #fff; }
.ln { flex: none; width: 32px; height: 1px; margin: 0 3px; background: #fff; }

main { flex: 1; min-height: 0; display: grid; grid-template-columns: 84px 261px minmax(0, 1fr) 350px 33px; }
.grip { display: block; width: 18px; height: 2px; background: repeating-linear-gradient(90deg, #999 0 2px, transparent 2px 3px); }

.pal { padding: 3px 2px; display: flex; flex-direction: column; align-items: flex-start; }
.pal > .grip { height: 5px; margin: 0 0 3px 33px; }
.pal button { width: 40px; height: 40px; border: 1px solid #2b2b2b; background: linear-gradient(#555, #474747); }
.pal .back { width: 80px; height: 30px; margin-bottom: 10px; }
.pg { display: flex; flex-wrap: wrap; width: 80px; margin-bottom: 8px; }
.pg svg { display: block; width: 38px; height: 38px; fill: none; }
.pg text { fill: #eee; font-size: 10px; }
.p { stroke: #fff; }
.pf { fill: #fff; }

.leftcol, .center, .rightcol { display: flex; flex-direction: column; min-height: 0; padding-bottom: 3px; }
.leftcol > .grip, .center > .grip, .rightcol > .grip { flex: none; align-self: center; margin: 2px 0; }
.center > .grip { margin-top: 0; }
.dock { display: flex; flex-direction: column; }
.dock h2 { position: relative; flex: none; height: 20px; line-height: 19px; text-align: center; background: #555; padding-right: 20px; border-bottom: 1px solid #2b2e30; }
.db { position: absolute; right: 2px; top: 4px; display: flex; gap: 2px; }
.db svg { width: 12px; height: 12px; }
.props { flex: 1; border: 1px solid #2b2e30; border-top: 0; }
.form { padding: 9px 9px 0 10px; }
.pr { display: flex; align-items: center; height: 24px; gap: 7px; padding-right: 10px; }
.pr label { flex: none; width: 100px; text-align: right; white-space: nowrap; }
.pr .combo, .pr input { flex: 1; min-width: 0; }
.pr input { height: 18px; padding: 0 3px; border: 1px solid #646464; background: #45494a; }
.pr input.ro { color: #999; border-color: #555; }
.pr.lt { height: 22px; }
.pr.t { height: 20px; }
.pr.top { height: 20px; padding: 0; }
.pr.top label { width: auto; }
.pr .combo.ly { flex: 0 0 96px; }
.lst { width: 20px; height: 20px; background: #2b2b2b; font-size: 20px; line-height: 18px; }
.form h3 { display: flex; align-items: center; gap: 6px; height: 15px; padding-left: 4px; margin-top: 4px; }
.form h3::after { content: ""; flex: 1; height: 1px; background: #2b2b2b; }
.form h3.sp { margin: 11px 0 2px; }
.form h3.cu { margin-top: 14px; }
.pr.nm label { width: 48px; }
.add { display: block; margin: 4px 14px 0 auto; height: 12px; }
.clip { flex: none; }
.cv { display: block; width: 100%; height: 128px; background: #000621; }
.big { font: 300 104px "Roboto", sans-serif; fill: #0ff; }

.center { padding-left: 6px; padding-right: 6px; }
.tabs { flex: none; height: 30px; border-bottom: 1px solid #fff; }
.tab { display: flex; align-items: center; width: 50%; height: 30px; padding: 0 9px 0 6px; background: #43506c; border: 1px solid #2b2b2b; border-bottom: 0; border-radius: 3px 3px 0 0; }
.tab span { flex: 1; text-align: center; padding-right: 4px; }
.tab button { font-size: 12px; }
.view { flex: 1; min-height: 0; display: grid; grid-template: 22px minmax(0, 1fr) 16px / 22px minmax(0, 1fr) 12px; }
.view svg { display: block; width: 100%; height: 100%; }
.view .rt text, .view .rl text { fill: #ddd; }
.corner { border: 1px solid #2e3133; }
.canvas { background: #000621; }
.cad { font: 100 38px "Roboto", sans-serif; }
.cy { fill: #0ff; }
.gr { fill: #0f0; font-size: 44px; }
.vs { padding: 328px 1px 0; }
.vs i { display: block; height: 190px; border-radius: 4px; background: #555; }
.hs { grid-column: 1 / -1; display: flex; align-items: center; padding-left: 4px; }
.hs i { width: 34%; height: 10px; margin-left: 30%; border-radius: 4px; background: #555; }
.hs span { margin-left: auto; }
.cmd { flex: none; height: 67px; }
.log { position: relative; height: 23px; overflow: hidden; display: flex; flex-direction: column; justify-content: flex-end; padding: 0 5px; border-bottom: 1px solid #2b2b2b; color: #2f8be0; }
.log p { flex: none; height: 15px; line-height: 15px; }
.log i { position: absolute; right: 0; top: 3px; width: 10px; height: 17px; border-radius: 4px; background: #555; }
.ci { display: flex; align-items: center; flex: 1; gap: 4px; padding-left: 1px; border-bottom: 1px solid #2b2b2b; }
.ci input { flex: 1; height: 16px; background: #45494a; }
.ci svg { display: block; }

.layers { flex: none; height: 321px; }
.lb { flex: none; display: flex; height: 20px; }
.lb button { flex: 1; display: flex; align-items: center; justify-content: center; color: #ddd; }
.ey { display: block; width: 16px; height: 12px; color: #fff; }
.off { color: #888; }
.ic { display: block; width: 14px; height: 14px; }
.list { flex: 1; border: 1px solid #2b2e30; }
table { width: 100%; border-collapse: collapse; table-layout: fixed; }
td { height: 16px; padding: 0; white-space: nowrap; }
tr.cur { background: #4b6eaf; }
.layers td:nth-child(1) { width: 25px; padding-left: 3px; }
.layers td:nth-child(3) { width: 24px; }
.layers td:nth-child(4) { width: 17px; }
.q { display: block; width: 16px; height: 8px; border: 1px solid #000; }
.lk { display: block; width: 11px; height: 15px; }
.cur .ey { color: #bcd8f0; }
.lower { flex: 1; min-height: 0; display: flex; }
.vt { flex: none; width: 26px; display: flex; flex-direction: column; gap: 1px; }
.vt button { width: 25px; writing-mode: vertical-rl; transform: rotate(180deg); border: 1px solid #2b2b2b; border-radius: 4px 0 0 4px; text-align: center; }
.v1 { height: 105px; }
.v2 { height: 67px; }
.vt .v2 { background: #43506c; }
.blocks { flex: 1; }
.bt td:nth-child(1) { width: 27px; padding-left: 4px; }
.bt td:nth-child(2) { width: 20px; }

.wins { padding: 3px 0 0 2px; }
.wins > .grip { height: 5px; margin: 0 0 3px 7px; }
.wins button { display: flex; align-items: center; justify-content: center; width: 29px; height: 29px; margin-bottom: 1px; }
.wins svg { width: 22px; height: 22px; }
.ws { display: block; height: 7px; }

.status { flex: none; display: flex; align-items: center; height: 43px; padding-bottom: 1px; border-bottom: 1px solid #2b2b2b; }
.status p { height: 21px; line-height: 21px; padding-left: 2px; }
.s1 { width: 17%; border-right: 1px solid #2b2b2b; }
.s2 { width: 17%; padding-left: 2px; }
.vg { width: 2px; height: 17px; background: repeating-linear-gradient(#888 0 2px, transparent 2px 3px); }
.s2 + .vg { margin-left: 4px; }
.s3 { width: 29%; display: flex; align-items: center; justify-content: center; gap: 10px; padding-right: 146px; }
.s4 { width: 22%; padding-left: 2px; }
.s5 { flex: 1; }
```
